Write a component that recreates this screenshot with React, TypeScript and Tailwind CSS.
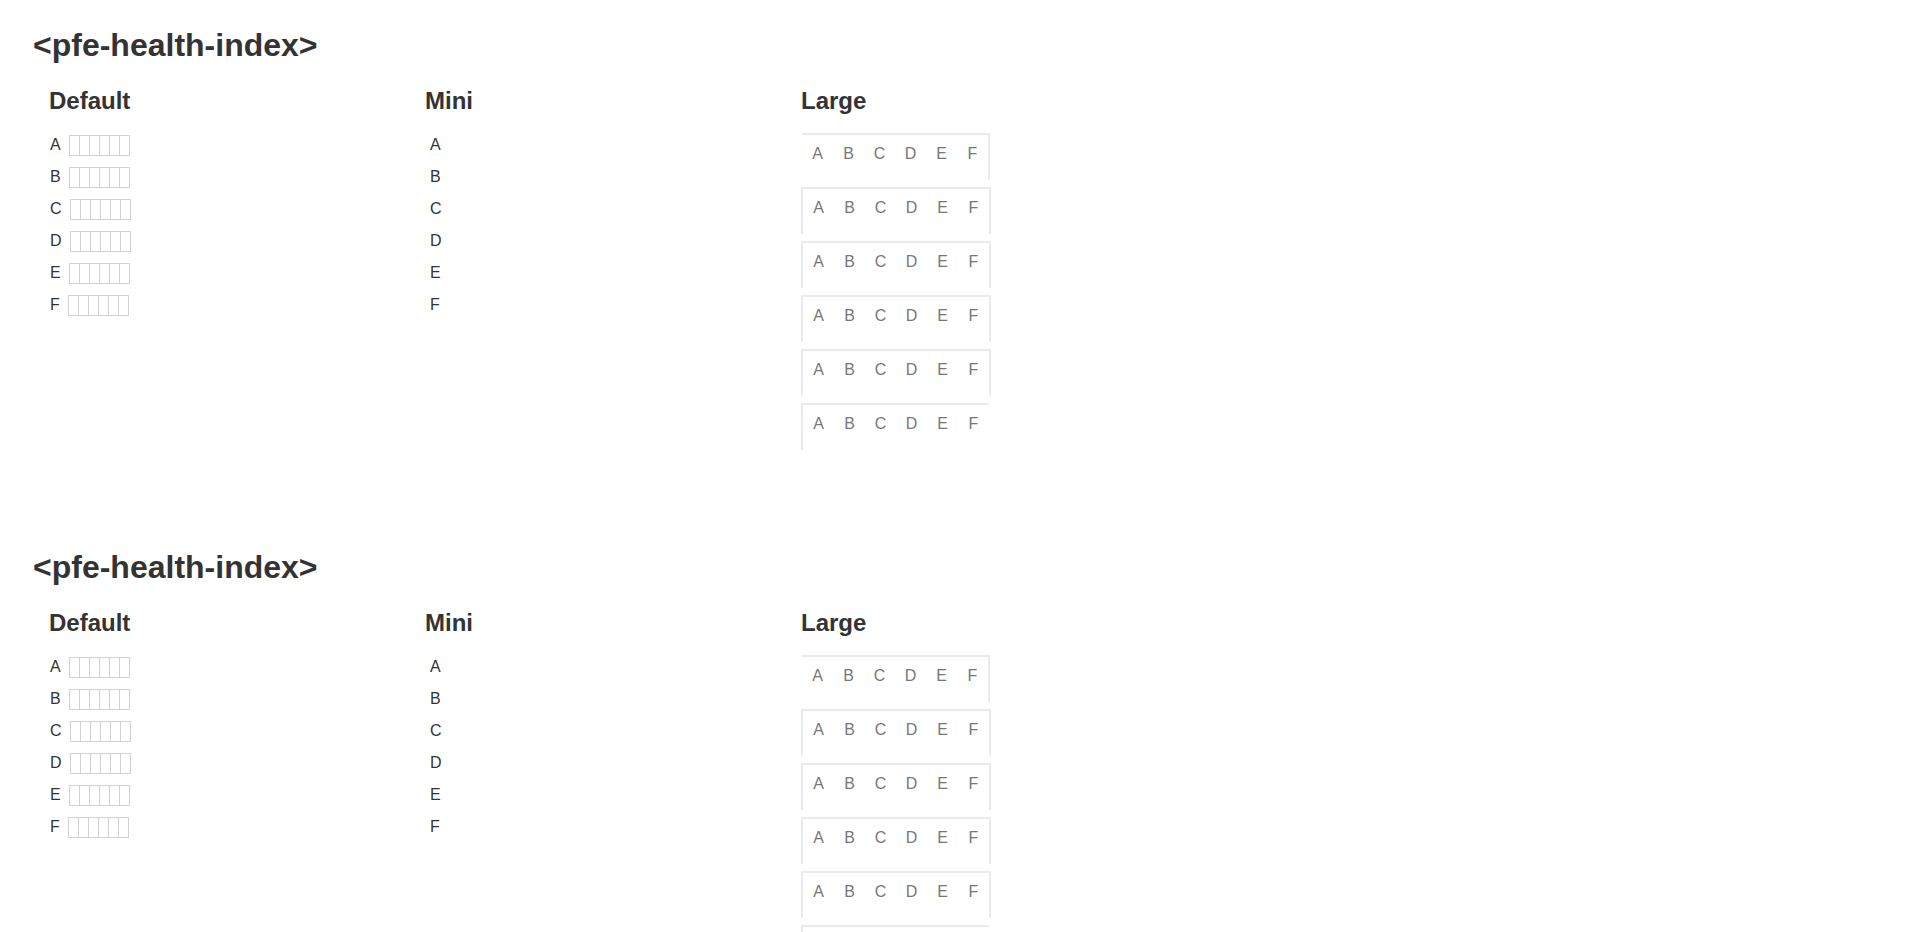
const letters = ['A', 'B', 'C', 'D', 'E', 'F']

function DefaultIndex({ letter }: { letter: string }) {
  return (
    <div className="flex h-[32px] items-center">
      <span className="ml-px text-[16px] leading-[24px] text-[#333]">{letter}</span>
      <div className="ml-[8px] flex border-r border-[#d2d2d2]">
        {letters.map((l) => (
          <div key={l} className="h-[21px] w-[10px] border-y border-l border-[#d2d2d2]" />
        ))}
      </div>
    </div>
  )
}

function MiniIndex({ letter }: { letter: string }) {
  return (
    <div className="flex h-[32px] items-center">
      <span className="ml-[5px] text-[16px] leading-[24px] text-[#333]">{letter}</span>
    </div>
  )
}

// first box has no left edge, last one no right edge, as in the rendered element
function LargeIndex({ index }: { index: number }) {
  const first = index === 0
  const last = index === letters.length - 1
  let edges = 'border-x-2'
  if (first) edges = 'ml-px border-r-2'
  if (last) edges = 'border-l-2'
  return (
    <div className={`flex h-[47px] w-fit border-t-2 border-[#ebebeb] ${edges}`}>
      {letters.map((l) => (
        <div key={l} className="w-[31px] pt-[7px] text-center text-[16px] leading-[24px] text-[#777]">
          {l}
        </div>
      ))}
    </div>
  )
}

function Section() {
  return (
    <section className="pt-[25px] pb-[72px]">
      <h1 className="text-[32px] font-bold leading-[40px] text-[#333]">&lt;pfe-health-index&gt;</h1>
      <div className="mt-[20px] flex pl-4">
        <div className="w-[376px]">
          <h2 className="text-[24px] font-bold leading-[32px] text-[#333]">Default</h2>
          <div className="mt-[12px]">
            {letters.map((l) => (
              <DefaultIndex key={l} letter={l} />
            ))}
          </div>
        </div>
        <div className="w-[376px]">
          <h2 className="text-[24px] font-bold leading-[32px] text-[#333]">Mini</h2>
          <div className="mt-[12px]">
            {letters.map((l) => (
              <MiniIndex key={l} letter={l} />
            ))}
          </div>
        </div>
        <div className="w-[376px]">
          <h2 className="text-[24px] font-bold leading-[32px] text-[#333]">Large</h2>
          <div className="mt-[16px] flex flex-col gap-[7px]">
            {letters.map((l, i) => (
              <LargeIndex key={l} index={i} />
            ))}
          </div>
        </div>
      </div>
    </section>
  )
}

export default function App() {
  return (
    <div className="min-h-screen bg-white pl-[33px] pr-8 font-['Liberation_Sans',Arial,sans-serif]">
      <Section />
      <Section />
    </div>
  )
}
